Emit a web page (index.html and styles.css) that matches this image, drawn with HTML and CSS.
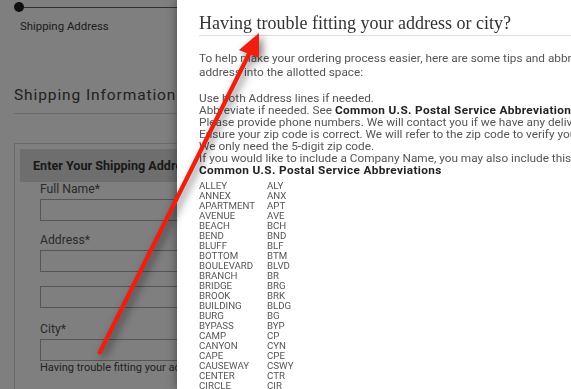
FILE: index.html
```html
<!DOCTYPE html>
<html lang="en">

<head>
    <meta charset="UTF-8" />
    <meta name="viewport" content="width=device-width, initial-scale=1.0" />
    <title>Shipping Address</title>
    <link rel="stylesheet" href="styles.css">
</head>

<body>
    <!-- checkout page, sits under the overlay -->
    <div class="page">
        <div class="progress">
            <span class="dot"></span>
            <span class="bar"></span>
        </div>
        <p class="step-name">Shipping Address</p>

        <h2 class="section-title">Shipping Information</h2>

        <div class="box">
            <h3 class="box-head">Enter Your Shipping Address</h3>
            <div class="fields">
                <label class="field">
                    <span>Full Name*</span>
                    <input type="text" />
                </label>
                <label class="field">
                    <span>Address*</span>
                    <input type="text" />
                </label>
                <label class="field line2">
                    <input type="text" />
                </label>
                <label class="field city">
                    <span>City*</span>
                    <input type="text" />
                </label>
                <p class="help">Having trouble fitting your address or city?</p>
            </div>
        </div>
    </div>

    <div class="dim"></div>

    <!-- help popup -->
    <div class="modal">
        <h1 class="modal-title">Having trouble fitting your address or city?</h1>
        <p class="intro">To help make your ordering process easier, here are some tips and abbreviations to help fit your<br />address into the allotted space:</p>
        <ul class="tips">
            <li>Use both Address lines if needed.</li>
            <li>Abbreviate if needed. See <b>Common U.S. Postal Service Abbreviations</b> below.</li>
            <li>Please provide phone numbers. We will contact you if we have any delivery issues.</li>
            <li>Ensure your zip code is correct. We will refer to the zip code to verify your city and state.</li>
            <li>We only need the 5-digit zip code.</li>
            <li>If you would like to include a Company Name, you may also include this in Address line 2.</li>
            <li><b>Common U.S. Postal Service Abbreviations</b></li>
        </ul>
        <table class="abbr">
            <tr><td>ALLEY</td><td>ALY</td></tr>
            <tr><td>ANNEX</td><td>ANX</td></tr>
            <tr><td>APARTMENT</td><td>APT</td></tr>
            <tr><td>AVENUE</td><td>AVE</td></tr>
            <tr><td>BEACH</td><td>BCH</td></tr>
            <tr><td>BEND</td><td>BND</td></tr>
            <tr><td>BLUFF</td><td>BLF</td></tr>
            <tr><td>BOTTOM</td><td>BTM</td></tr>
            <tr><td>BOULEVARD</td><td>BLVD</td></tr>
            <tr><td>BRANCH</td><td>BR</td></tr>
            <tr><td>BRIDGE</td><td>BRG</td></tr>
            <tr><td>BROOK</td><td>BRK</td></tr>
            <tr><td>BUILDING</td><td>BLDG</td></tr>
            <tr><td>BURG</td><td>BG</td></tr>
            <tr><td>BYPASS</td><td>BYP</td></tr>
            <tr><td>CAMP</td><td>CP</td></tr>
            <tr><td>CANYON</td><td>CYN</td></tr>
            <tr><td>CAPE</td><td>CPE</td></tr>
            <tr><td>CAUSEWAY</td><td>CSWY</td></tr>
            <tr><td>CENTER</td><td>CTR</td></tr>
            <tr><td>CIRCLE</td><td>CIR</td></tr>
            <tr><td>CLIFF</td><td>CLF</td></tr>
            <tr><td>CLUB</td><td>CLB</td></tr>
        </table>
    </div>

    <!-- red annotation arrow -->
    <svg class="arrow" width="571" height="389" viewBox="0 0 571 389">
        <line x1="99" y1="354" x2="251" y2="50" stroke="#f01e0e" stroke-width="4.2" />
        <polygon points="259,33 239,50 259,58" fill="#f01e0e" />
    </svg>
</body>

</html>
```

FILE: styles.css
```css
* {
    margin: 0;
    padding: 0;
}

body {
    overflow: hidden;
    background: #fff;
    color: #444;
    font-family: Roboto, "Liberation Sans", sans-serif;
}

/* page under the overlay */
.page {
    padding-left: 14px;
}

.progress {
    display: flex;
    align-items: center;
    margin-top: 2px;
}

.progress .dot {
    width: 10px;
    height: 10px;
    border-radius: 50%;
    background: #1e1e1e;
}

.progress .bar {
    flex: 1;
    height: 1px;
    background: #666;
}

.step-name {
    margin-top: 7px;
    padding-left: 6px;
    font-size: 11.4px;
    line-height: 15px;
    color: #3a3a3a;
}

.section-title {
    margin-top: 51px;
    padding-bottom: 8px;
    border-bottom: 1px solid #d6d6d6;
    font-size: 15.5px;
    font-weight: normal;
    letter-spacing: 0.9px;
    line-height: 20px;
    color: #444;
    white-space: nowrap;
}

.box {
    margin-top: 29px;
    border: 1px solid #d4d4d4;
    padding: 5px 5px 40px;
}

.box-head {
    height: 33px;
    line-height: 33px;
    padding-left: 13px;
    background: #dcdcdc;
    font-size: 12.6px;
    color: #333;
    white-space: nowrap;
}

.fields {
    padding-left: 20px;
}

.field {
    display: block;
    margin-top: 12px;
}

.field:first-child {
    margin-top: 0;
}

.field.line2,
.field.city {
    margin-top: 14px;
}

.field span {
    display: block;
    margin-bottom: 2px;
    font-size: 12.2px;
    line-height: 15px;
    color: #555;
}

.field input {
    display: block;
    width: 300px;
    height: 22px;
    box-sizing: border-box;
    border: 1px solid #aaa;
    background: transparent;
    outline: none;
}

.help {
    font-size: 11px;
    line-height: 14px;
    color: #444;
    white-space: nowrap;
}

.dim {
    position: fixed;
    top: 0;
    right: 0;
    bottom: 0;
    left: 0;
    background: rgba(0, 0, 0, 0.5);
}

/* popup */
.modal {
    position: fixed;
    top: 0;
    bottom: 0;
    left: 177px;
    width: 620px;
    padding: 13px 0 0 22px;
    background: #fff;
    box-shadow: 0 0 10px rgba(0, 0, 0, 0.45);
    overflow: hidden;
}

.modal-title {
    padding-bottom: 2px;
    border-bottom: 1px solid #ddd;
    font: normal 18px/20px "Liberation Serif", serif;
    color: #333;
}

.intro {
    margin-top: 15px;
    font-size: 11.8px;
    line-height: 14px;
    color: #555;
    white-space: nowrap;
}

.tips {
    list-style: none;
    margin-top: 13px;
    font-size: 11.8px;
    line-height: 12px;
    color: #555;
    white-space: nowrap;
}

.tips b {
    color: #222;
    letter-spacing: 0.35px;
}

.abbr {
    margin-top: 5px;
    border-collapse: collapse;
    font-size: 9.7px;
    line-height: 10px;
    color: #555;
}

.abbr td {
    height: 10px;
    padding: 0;
}

.abbr td:first-child {
    width: 68px;
}

.arrow {
    position: fixed;
    top: 0;
    left: 0;
    filter: drop-shadow(3px 3px 4px rgba(0, 0, 0, 0.55));
}
```
